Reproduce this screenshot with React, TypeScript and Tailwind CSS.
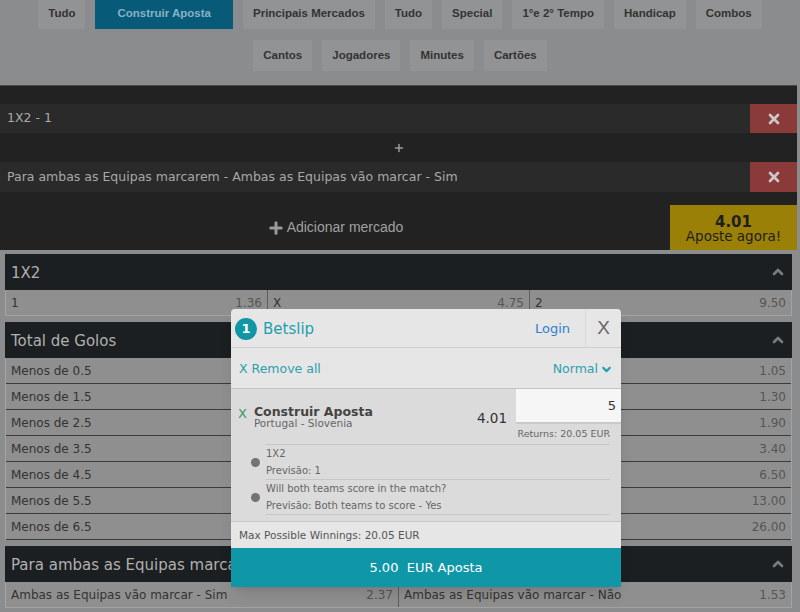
import { ChevronDown, ChevronUp, Plus, X } from "lucide-react";

const tabsTop = ["Tudo", "Construir Aposta", "Principais Mercados", "Tudo", "Special", "1°e 2° Tempo", "Handicap", "Combos", "Cantos", "Jogadores", "Minutes", "Cartões"];

const golos = [
  ["Menos de 0.5", "1.05"],
  ["Menos de 1.5", "1.30"],
  ["Menos de 2.5", "1.90"],
  ["Menos de 3.5", "3.40"],
  ["Menos de 4.5", "6.50"],
  ["Menos de 5.5", "13.00"],
  ["Menos de 6.5", "26.00"],
];

function SectionHeader({ title }: { title: string }) {
  return (
    <div className="h-[36px] bg-[#1c1f22] flex items-center justify-between pl-[6px] pr-[6px]">
      <span className="text-[15px] text-[#b0b0b0] mt-[2px]">{title}</span>
      <ChevronUp className="w-[16px] h-[16px] text-[#7a7a7a]" strokeWidth={4} />
    </div>
  );
}

function OddCell({ label, value, last }: { label: string; value: string; last?: boolean }) {
  return (
    <div className={`flex-1 flex items-center justify-between px-[5px] ${last ? "" : "border-r border-[#5c5c5c]"}`}>
      <span className="text-[#333]">{label}</span>
      <span className="text-[#555]">{value}</span>
    </div>
  );
}

export default function App() {
  return (
    <div className="relative h-[612px] overflow-hidden bg-[#8b8c8e] font-['DejaVu_Sans',sans-serif]">
      {/* market tabs */}
      <div className="mt-[-2px] flex flex-wrap justify-center gap-x-[10px] gap-y-[11px] px-[20px] font-['Liberation_Sans',sans-serif] text-[11.5px] font-bold">
        {tabsTop.map((t, i) => (
          <div
            key={i}
            className={`h-[31px] flex items-center ${i === 1 ? "bg-[#075a78] text-[#86b2c6] px-[22px]" : "bg-[#929394] text-[#333] px-[10px]"}`}
          >
            {t}
          </div>
        ))}
      </div>

      {/* bet builder panel */}
      <div className="mt-[14px] mr-[3px] bg-[#222] border-t border-[#4a4a4a] text-[12.5px] text-[#a8a8a8]">
        <div className="h-[18px]" />
        <div className="h-[29px] flex bg-[#2a2a2a]">
          <div className="flex-1 flex items-center pl-[7px]">1X2 - 1</div>
          <div className="w-[47px] bg-[#8b3a3a] flex items-center justify-center">
            <X className="w-[16px] h-[16px] text-[#c9c9c9]" strokeWidth={4} />
          </div>
        </div>
        <div className="h-[29px] flex items-center justify-center">
          <Plus className="w-[12px] h-[12px] text-[#9a9a9a]" strokeWidth={3} />
        </div>
        <div className="h-[30px] flex bg-[#2a2a2a]">
          <div className="flex-1 flex items-center pl-[7px]">Para ambas as Equipas marcarem - Ambas as Equipas vão marcar - Sim</div>
          <div className="w-[47px] bg-[#8b3a3a] flex items-center justify-center">
            <X className="w-[16px] h-[16px] text-[#c9c9c9]" strokeWidth={4} />
          </div>
        </div>
        <div className="h-[58px] flex">
          <div className="flex-1 flex items-center justify-center gap-[2px] pt-[13px] font-['Liberation_Sans',sans-serif] text-[14px] text-[#a0a0a0]">
            <Plus className="w-[18px] h-[18px] text-[#9a9a9a]" strokeWidth={4} />
            Adicionar mercado
          </div>
          <div className="w-[127px] mt-[13px] pt-[2px] bg-[#9b8008] flex flex-col items-center justify-center text-[#1e1e1e]">
            <span className="text-[15px] leading-[14px] font-bold">4.01</span>
            <span className="text-[13.5px] leading-[14px]">Aposte agora!</span>
          </div>
        </div>
      </div>

      {/* markets */}
      <div className="mx-[5px] mr-[8px] mt-[4px] flex flex-col gap-[6px] text-[12px]">
        <div>
          <SectionHeader title="1X2" />
          <div className="h-[26px] flex bg-[#8f8f8f] border border-t-0 border-[#a3a3a3]">
            <OddCell label="1" value="1.36" />
            <OddCell label="X" value="4.75" />
            <OddCell label="2" value="9.50" last />
          </div>
        </div>
        <div>
          <SectionHeader title="Total de Golos" />
          <div className="bg-[#8f8f8f] border-x border-[#a3a3a3]">
            {golos.map(([l, v]) => (
              <div key={l} className="h-[26px] flex items-center justify-between px-[5px] border-b border-[#3a3a3a]">
                <span className="text-[#333]">{l}</span>
                <span className="text-[#555]">{v}</span>
              </div>
            ))}
          </div>
        </div>
        <div>
          <SectionHeader title="Para ambas as Equipas marcarem" />
          <div className="h-[26px] flex bg-[#8f8f8f] border border-t-0 border-[#a3a3a3]">
            <OddCell label="Ambas as Equipas vão marcar - Sim" value="2.37" />
            <OddCell label="Ambas as Equipas vão marcar - Não" value="1.53" last />
          </div>
        </div>
      </div>

      {/* betslip modal */}
      <div className="absolute left-[231px] top-[309px] w-[390px] rounded-t-[4px] overflow-hidden bg-[#e6e6e6] shadow-lg">
        <div className="h-[39px] flex items-center border-b border-[#cfcfcf]">
          <div className="ml-[4px] mt-[2px] w-[22px] h-[22px] rounded-full bg-[#1196a6] text-white text-[13px] font-bold flex items-center justify-center">1</div>
          <span className="ml-[6px] mt-[2px] text-[15px] text-[#1f9fae]">Betslip</span>
          <span className="ml-auto mr-[15px] mt-[2px] text-[13px] text-[#2f7fd0]">Login</span>
          <div className="w-[36px] h-full flex items-center justify-center border-l border-[#dadada] text-[19px] text-[#666] font-['Liberation_Sans',sans-serif]">X</div>
        </div>
        <div className="h-[41px] flex items-center justify-between px-[8px] pt-[2px] border-b border-[#c4c4c4] text-[12.5px] text-[#2aa1ad]">
          <span>X Remove all</span>
          <span className="flex items-center gap-[2px]">
            Normal
            <ChevronDown className="w-[13px] h-[13px]" strokeWidth={4} />
          </span>
        </div>
        <div className="bg-[#dbdbdb] border-b border-[#c8c8c8]">
          <div className="flex">
            <div className="flex-1 flex items-start pl-[7px] pt-[16px]">
              <span className="text-[13px] text-[#3a9a5e] mr-[7px] leading-[14px] mt-[2px]">X</span>
              <div className="flex flex-col">
                <span className="text-[12.5px] leading-[13px] font-bold text-[#444]">Construir Aposta</span>
                <span className="text-[10.5px] leading-[10px] text-[#666]">Portugal - Slovenia</span>
              </div>
              <span className="ml-auto mr-[9px] mt-[3px] text-[13.5px] text-[#333]">4.01</span>
            </div>
            <div className="w-[105px] flex flex-col">
              <div className="h-[35px] bg-[#f6f6f6] border-b-2 border-[#c9c9c9] flex items-center justify-end pr-[5px] text-[13px] text-[#333]">5</div>
              <div className="h-[20px] flex items-center justify-end pr-[11px] text-[9.5px] text-[#666] whitespace-nowrap">Returns: 20.05 EUR</div>
            </div>
          </div>
          <div className="ml-[35px] mr-[11px] mb-[6px] text-[10px] text-[#666]">
            {[
              ["1X2", "Previsão: 1"],
              ["Will both teams score in the match?", "Previsão: Both teams to score - Yes"],
            ].map(([a, b]) => (
              <div key={a} className="relative h-[35px] border-t border-[#c6c6c6] flex flex-col justify-center gap-[5px] leading-[12px]">
                <span className="absolute left-[-15px] top-[13px] w-[9px] h-[9px] rounded-full bg-[#737373]" />
                <span>{a}</span>
                <span>{b}</span>
              </div>
            ))}
            <div className="border-t border-[#c6c6c6]" />
          </div>
        </div>
        <div className="h-[26px] flex items-center px-[8px] pt-[2px] text-[10.5px] text-[#555]">Max Possible Winnings: 20.05 EUR</div>
        <div className="h-[39px] bg-[#0f97a7] flex items-center justify-center text-[13px] text-white whitespace-pre">5.00  EUR Aposta</div>
      </div>
    </div>
  );
}
